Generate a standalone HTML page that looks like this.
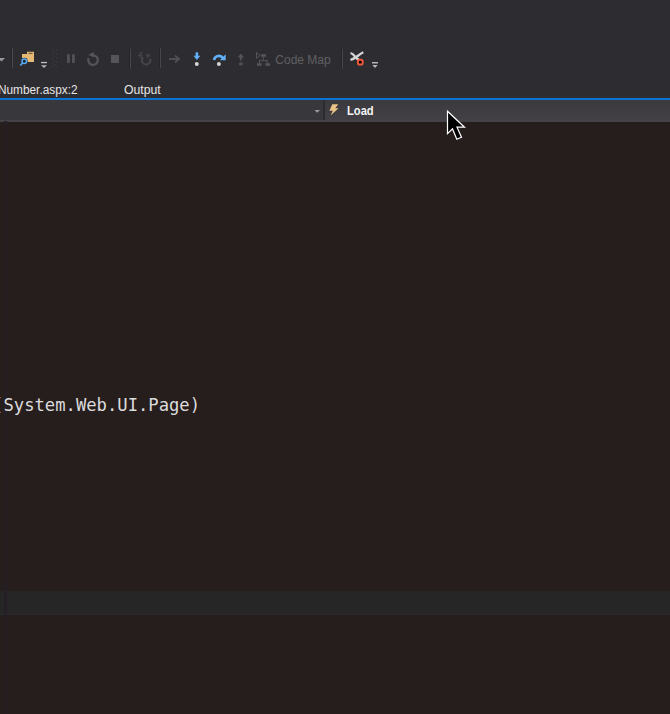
<!DOCTYPE html>
<html><head><meta charset="utf-8">
<style>
html,body{margin:0;padding:0;}
body{width:670px;height:714px;overflow:hidden;background:#2d2c30;position:relative;font-family:"Liberation Sans",sans-serif;}
.abs{position:absolute;}
#editor{left:0;top:121px;width:670px;height:593px;background:#261e1d;}
#blue{left:0;top:97.8px;width:670px;height:2.2px;background:#0c74d4;}
#nav{left:0;top:100px;width:670px;height:21.5px;background:linear-gradient(#3b393d,#434146);}
#navl{left:0;top:100px;width:323px;height:20.2px;background:#38373b;}
#navsep{left:322.6px;top:100px;width:2.8px;height:20.2px;background:#2c2b2f;}
#navb{left:0;top:120.2px;width:670px;height:1.3px;background:#464449;}
#band{left:0;top:590.5px;width:670px;height:24px;background:#262626;border-bottom:1px solid #2b2a2a;box-sizing:border-box;}
#gut{left:3.8px;top:121px;width:3.6px;height:593px;background:#251e25;}
.t{color:#e6e6e6;font-size:12px;white-space:nowrap;transform-origin:0 0;}
#code{left:-6.9px;top:394.6px;line-height:20px;font-family:"DejaVu Sans Mono","Liberation Mono",monospace;font-size:17.2px;color:#dcdcdc;white-space:nowrap;}
svg{position:absolute;left:0;top:0;}
</style></head><body>
<div id="editor" class="abs"></div>
<div id="blue" class="abs"></div>
<div id="nav" class="abs"></div>
<div id="navl" class="abs"></div>
<div id="navsep" class="abs"></div>
<div id="navb" class="abs"></div>
<div id="band" class="abs"></div>
<div id="gut" class="abs"></div>
<div class="abs t" style="left:-2px;top:83px;transform:scaleX(0.985);">Number.aspx:2</div>
<div class="abs t" style="left:124px;top:83px;transform:scaleX(1.02);">Output</div>
<div class="abs t" style="left:275.3px;top:53px;color:#606064;transform:scaleX(1.0);">Code Map</div>
<div class="abs t" style="left:347.3px;top:104.4px;font-weight:bold;color:#f4f4f4;transform:scaleX(0.93);">Load</div>
<div id="code" class="abs">(System.Web.UI.Page)</div>
<svg width="670" height="714" viewBox="0 0 670 714">
 <!-- left dropdown triangle -->
 <polygon points="-2,58 5,58 1.5,61.5" fill="#999"/>
 <!-- separators -->
 <rect x="11" y="48" width="1" height="20" fill="#262529"/><rect x="12" y="48" width="1" height="20" fill="#4a494d"/>
 <rect x="129" y="49" width="1" height="20" fill="#262529"/><rect x="130" y="49" width="1" height="20" fill="#47464a"/>
 <rect x="159" y="48" width="1" height="20" fill="#262529"/><rect x="160" y="48" width="1" height="20" fill="#47464a"/>
 <rect x="341" y="49" width="1" height="20" fill="#262529"/><rect x="342" y="49" width="1" height="20" fill="#47464a"/>
 <!-- folder -->
 <path d="M27 51.7 H34 V62 H22 V54 H27 Z" fill="#e4b975"/>
 <rect x="28.5" y="52.8" width="4" height="1" fill="#5a4a30"/>
 <!-- magnifier -->
 <circle cx="24.3" cy="61.2" r="3.4" fill="#2d2c30"/>
 <circle cx="24.3" cy="61.2" r="2.3" fill="#1c2a3c" stroke="#5aa9f2" stroke-width="1.5"/>
 <line x1="22.5" y1="63" x2="20.3" y2="65.6" stroke="#5aa9f2" stroke-width="1.6"/>
 <!-- overflow 1 -->
 <rect x="41" y="61.9" width="6" height="1.3" fill="#c0c0c0"/>
 <polygon points="41,65.2 47,65.2 44,68" fill="#b4b4b4"/>
 <!-- grip dots -->
 <g fill="#3f3e42" transform="translate(-1,1)">
  <rect x="53" y="49" width="1" height="1"/><rect x="57" y="49" width="1" height="1"/>
  <rect x="55" y="51" width="1" height="1"/>
  <rect x="53" y="53" width="1" height="1"/><rect x="57" y="53" width="1" height="1"/>
  <rect x="55" y="55" width="1" height="1"/>
  <rect x="53" y="57" width="1" height="1"/><rect x="57" y="57" width="1" height="1"/>
  <rect x="55" y="59" width="1" height="1"/>
  <rect x="53" y="61" width="1" height="1"/><rect x="57" y="61" width="1" height="1"/>
  <rect x="55" y="63" width="1" height="1"/>
  <rect x="53" y="65" width="1" height="1"/><rect x="57" y="65" width="1" height="1"/>
 </g>
 <!-- pause -->
 <rect x="67" y="54.3" width="2.9" height="8.6" fill="#525155"/>
 <rect x="72" y="54.3" width="2.9" height="8.6" fill="#525155"/>
 <!-- restart -->
 <path d="M93.5 55.3 A4.8 4.8 0 1 1 88.65 58.1" fill="none" stroke="#555458" stroke-width="2.2"/>
 <polygon points="88.3,54.8 93.9,52 93.9,57.6" fill="#555458"/>
 <!-- stop -->
 <rect x="111" y="55" width="8" height="8" fill="#555458"/>
 <!-- hot reload -->
 <path d="M143.2 57.2 A4.2 4.2 0 1 0 150 58.6" fill="none" stroke="#464549" stroke-width="2"/>
 <polygon points="145.8,53.6 150.6,55 147.2,58.6" fill="#464549"/>
 <path d="M142.3 52 L139 55.3 L141.6 55.6 L139.6 58.2" fill="none" stroke="#464549" stroke-width="1.3"/>
 <!-- right arrow -->
 <path d="M169 59 H178 M175 55.5 L179 59 L175 62.5" fill="none" stroke="#4f4e52" stroke-width="1.8"/>
 <!-- step into -->
 <path d="M196.9 52.3 V57.5" stroke="#62b0f8" stroke-width="2.6" fill="none"/>
 <polygon points="193.5,55.8 200.3,55.8 196.9,60" fill="#62b0f8"/>
 <circle cx="196.8" cy="63.9" r="2" fill="#d4d4d4"/>
 <!-- step over -->
 <path d="M214 60 A5 5 0 0 1 223 58" fill="none" stroke="#62b0f8" stroke-width="2.6"/>
 <polygon points="225.7,54.3 225.7,60.3 219.8,60.3" fill="#62b0f8"/>
 <circle cx="218.9" cy="63.9" r="2" fill="#d4d4d4"/>
 <!-- step out -->
 <path d="M240.8 56 V60.5" stroke="#555458" stroke-width="1.8" fill="none"/>
 <polygon points="237.6,57.5 244,57.5 240.8,53.5" fill="#555458"/>
 <rect x="239" y="62.2" width="3.8" height="3.4" rx="1" fill="#4e4d51"/>
 <!-- code map icon -->
 <g fill="#555458" stroke="none">
  <path d="M256.5 52.5 L260 55.4 L256.5 58.3 Z" fill="none" stroke="#555458" stroke-width="1"/>
  <rect x="261" y="54.2" width="5" height="2.6"/>
  <rect x="262.8" y="56.8" width="1" height="4"/>
  <rect x="259" y="60.2" width="8.5" height="1"/>
  <rect x="259" y="60.2" width="1" height="3"/>
  <rect x="266.5" y="60.2" width="1" height="3"/>
  <rect x="257" y="63.2" width="4.6" height="2.6"/>
  <rect x="265.4" y="63.2" width="4.6" height="2.6"/>
 </g>
 <!-- breakpoints icon -->
 <path d="M350.5 53 C355 54, 355 59, 359 59.5" fill="none" stroke="#d6d6d6" stroke-width="2.3"/>
 <path d="M350.5 59.8 C356 58.5, 358 55, 363.3 52.3" fill="none" stroke="#d6d6d6" stroke-width="2.3"/>
 <rect x="357.9" y="59.8" width="4.8" height="4.8" rx="1.9" fill="#000" stroke="#f0583b" stroke-width="2"/>
 <!-- overflow 2 -->
 <rect x="372" y="62" width="6" height="1.5" fill="#b4b4b4"/>
 <polygon points="372.3,65 377.7,65 375,68" fill="#b4b4b4"/>
 <!-- nav dropdown arrow -->
 <polygon points="314.5,110 320,110 317.2,112.7" fill="#999"/>
 <!-- lightning -->
 <polygon points="332.3,104.3 338.2,104.3 335.4,108.3 338.6,108.3 330.6,115.6 332.8,110.8 329.4,110.8" fill="#e8c487"/>
 <!-- cursor -->
 <path transform="translate(0,0.7)" d="M447.5 110.5 V133 L452.5 128.2 L456.8 138.5 L461.5 136.5 L457 126.5 H464.5 Z" fill="#000" stroke="#fff" stroke-width="1.2" stroke-linejoin="miter"/>
</svg>
</body></html>
